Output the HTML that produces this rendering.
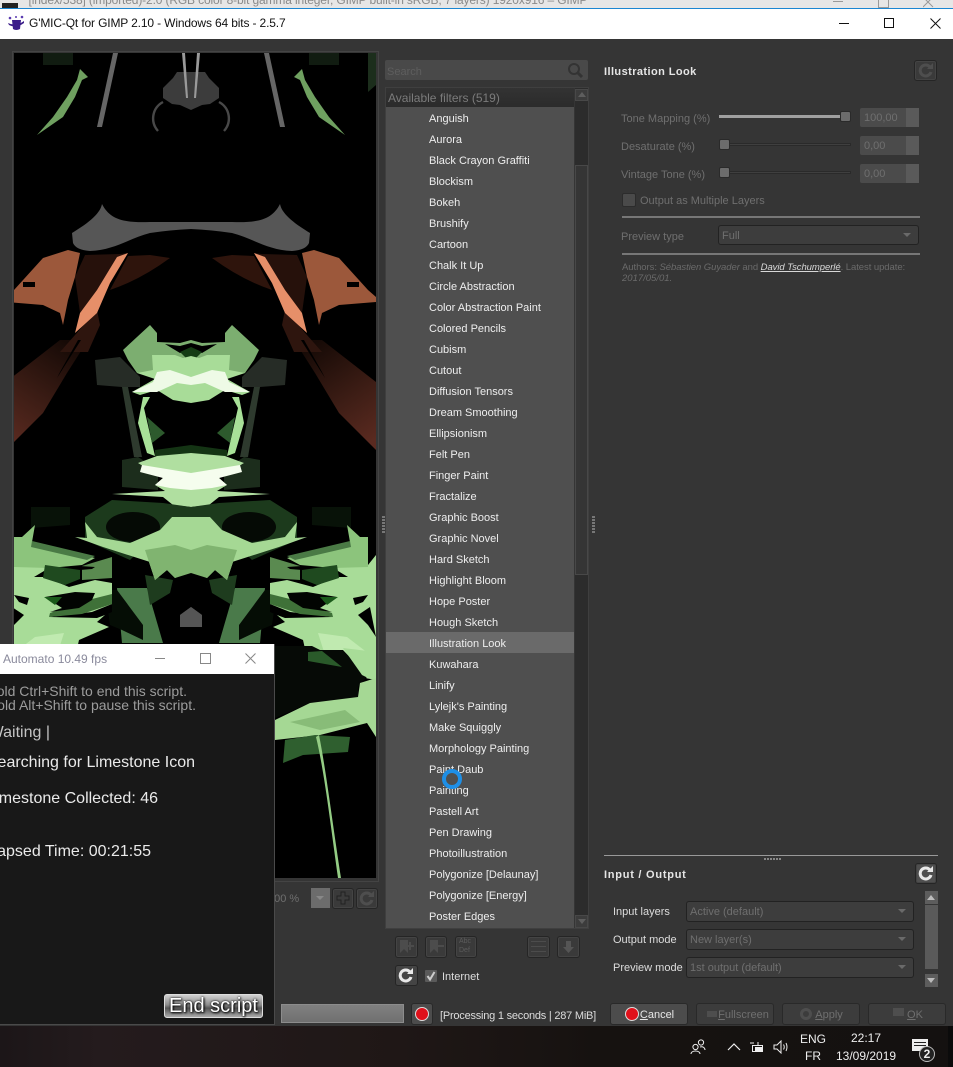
<!DOCTYPE html>
<html><head><meta charset="utf-8"><style>
html,body{margin:0;padding:0;background:#353535}
body{width:953px;height:1067px;position:relative;overflow:hidden;font-family:"Liberation Sans",sans-serif;font-size:11px;color:#ddd}
.a{position:absolute}
.t{position:absolute;white-space:nowrap;line-height:14px}
.btn{position:absolute;box-sizing:border-box;border:1px solid #252525;border-radius:3px;background:#3a3a3a;box-shadow:inset 0 0 0 1px #444}
.dim{color:#6f6f6f}
.combo{position:absolute;box-sizing:border-box;border:1px solid #222;border-radius:3px;background:#3d3d3d;color:#6f6f6f;line-height:20px;padding-left:3px;font-size:11px}
.combo:after{content:"";position:absolute;right:7px;top:7px;border:4px solid transparent;border-top:4px solid #6a6a6a;border-bottom:0}
.spin{position:absolute;left:860px;width:59px;height:19px;background:#4b4b4b;color:#6f6f6f;line-height:20px;padding-left:4px;box-sizing:border-box;border-radius:2px}
.spin:after{content:"";position:absolute;right:0;top:0;width:13px;height:19px;background:#5a5a5a}
.track{position:absolute;left:719px;width:132px;height:3px;background:#3f3f3f;border:1px solid #2a2a2a;box-sizing:border-box}
.hd{position:absolute;width:11px;height:11px;background:#6c6c6c;border:1px solid #2a2a2a;border-radius:2px;box-sizing:border-box}
#list{position:absolute;left:386px;top:107px;width:188px;height:821px;background:#4f4f4f;overflow:hidden}
#list div{height:21px;line-height:24px;padding-left:43px;color:#eee;white-space:nowrap}
#list .s{background:#6a6a6a}
.bb{position:absolute;top:1003px;height:22px;box-sizing:border-box;border:1px solid #292929;border-radius:3px;background:#3c3c3c;line-height:23px;color:#6f6f6f;text-align:center}
.w{position:absolute;white-space:nowrap;line-height:18px}
</style></head><body>

<!-- top strip -->
<div class="a" style="left:0;top:0;width:953px;height:8px;background:#e6e6e6;overflow:hidden">
<div class="t" style="left:24px;top:-7px;font-size:12px;color:#8a8a8a;letter-spacing:-.14px">*[index/538] (imported)-2.0 (RGB color 8-bit gamma integer, GIMP built-in sRGB, 7 layers) 1920x916 – GIMP</div>
<div class="a" style="left:2px;top:3px;width:16px;height:5px;background:#222"></div>
<div class="a" style="left:833px;top:1px;width:10px;height:1px;background:#999"></div>
<div class="a" style="left:878px;top:-3px;width:9px;height:9px;border:1px solid #999"></div>
<svg class="a" style="left:923px;top:0" width="12" height="8"><path d="M0 -3L10 7M10 -3L0 7" stroke="#999" fill="none"/></svg>
</div>
<div class="a" style="left:0;top:8px;width:953px;height:1px;background:#1b86d2"></div>
<!-- title -->
<div class="a" style="left:0;top:9px;width:953px;height:30px;background:#fff"></div>
<svg class="a" style="left:7px;top:15px" width="18" height="17" viewBox="0 0 18 17"><path d="M5 5L14 5L13 14Q9 16 6 14Z" fill="#3b1d8a"/><path d="M1 8Q9 12 17 6L17 8Q9 14 2 10Z" fill="#3b1d8a"/><circle cx="3" cy="3" r="1.3" fill="#5a3bb0"/><circle cx="15" cy="2" r="1.3" fill="#5a3bb0"/><circle cx="9" cy="2" r="1" fill="#5a3bb0"/></svg>
<div class="t" style="left:29px;top:16px;font-size:12px;color:#111;letter-spacing:-.145px">G'MIC-Qt for GIMP 2.10 - Windows 64 bits - 2.5.7</div>
<div class="a" style="left:839px;top:23px;width:10px;height:1px;background:#111"></div>
<div class="a" style="left:884px;top:18px;width:8px;height:8px;border:1px solid #111"></div>
<svg class="a" style="left:930px;top:18px" width="11" height="11"><path d="M0.5 0.5L10.5 10.5M10.5 0.5L0.5 10.5" stroke="#111" fill="none"/></svg>

<!-- preview -->
<div class="a" style="left:12px;top:51px;width:365px;height:829px;border:1px solid #444;box-sizing:content-box"></div>
<svg class="a" style="left:14px;top:53px" width="362" height="825" viewBox="14 53 362 825">
<rect x="14" y="53" width="362" height="825" fill="#000"/>
<defs>
<linearGradient id="br" x1="0.7" y1="0" x2="0.2" y2="1"><stop offset="0" stop-color="#160a06"/><stop offset=".6" stop-color="#3f1e16"/><stop offset="1" stop-color="#5a2a20"/></linearGradient>
</defs>
<g id="h">
<rect x="43" y="53" width="30" height="12" fill="#111c11"/>
<path d="M6 53H14V92L6 85Z" fill="#1c2e1c"/>
<path d="M37 135L53 117L67 97L77 80L80 69L88 77L82 80L75 97L63 117Z" fill="#6fa060"/>
<path d="M113 53L118 53L102 127L97 127Z" fill="#666"/>
<path d="M177 72L173 78L163 88L163 98L172 104L180 105L191 110V72Z" fill="#3c3c3c"/>
<path d="M163 102C152 108 150 122 158 131" stroke="#484848" stroke-width="2.4" fill="none"/>
<path d="M182 53L185 53L188 98L186 98Z" fill="#9a9a9a"/>
<path d="M102 204C100 215 85 225 72 233L73 243Q76 250 90 251C115 250 130 238 150 233Q170 230 191 229V222Q170 222 150 222C125 223 110 220 102 204Z" fill="#565656"/>
<!-- brown -->
<path d="M6 382L60 340L88 340L67 373L43 413L6 450Z" fill="url(#br)"/>
<path d="M75 277L85 255L120 254L128 253L110 283L97 290L80 313Z" fill="#26110b"/>
<path d="M97 310L75 335L60 352L88 352L100 325Z" fill="#2e150e"/>
<path d="M110 290Q140 280 170 258L150 255L128 256L118 275Z" fill="#2e140c"/>
<path d="M6 297L14 290L43 258L68 250L80 253L75 277L68 300L63 325L60 313L43 305L6 302Z" fill="#9c583b"/>
<path d="M23 282L35 282L35 287L23 287Z" fill="#000"/>
<path d="M128 253L117 257L97 290L80 313L75 333L97 313L110 283Z" fill="#e68f69"/>
<path d="M57 378L60 372L78 340L81 340Z" fill="#000"/>
<!-- centre -->
<path d="M95 360L120 357L140 377L140 387L122 387L97 385Z" fill="#262c26"/>
<path d="M122 387L128 387L142 457L134 457Z" fill="#2e3a2e"/>
<path d="M122 460L138 457L158 470L158 490L122 487Z" fill="#1c2d1c"/>
<path d="M123 350L150 325L157 333L157 342L180 343L191 340L191 375L137 373L128 360Z" fill="#7cae70"/>
<path d="M165 344L180 346L191 343L191 350L180 353Z" fill="#000"/>
<path d="M180 352L191 347L191 363Z" fill="#143c14"/>
<path d="M152 355L175 355L183 358L191 356L191 403L173 400L157 390L140 395L132 392L155 379L137 373L153 370Z" fill="#a8dc98"/>
<path d="M157 372L170 370L191 377L191 385L177 383L157 392L132 392L153 382Z" fill="#eefae6"/>
<path d="M143 397L138 423L147 453L155 456L144 408L150 397Z" fill="#a8e098"/>
<path d="M147 417L165 433L152 443Z" fill="#2d5a2d"/>
<path d="M155 450L191 445L191 456L155 456Z" fill="#143414"/>
<path d="M138 463L157 456L191 453L191 507L173 505L163 497L112 494L165 491L155 485L163 478Z" fill="#b0dfa0"/>
<path d="M142 465L191 473L191 490L170 488L155 485L163 478L140 472Z" fill="#f5fdee"/>
<path d="M85 517L112 500L163 503L191 507L191 530L172 517L160 530L130 560L85 540Z" fill="#1c3a1c"/>
<ellipse cx="133" cy="527" rx="27" ry="15" fill="#050a05"/>
<path d="M31 507L70 507L70 525L31 528Z" fill="#081208"/>
<path d="M117 588L147 588L163 643L122 643Z" fill="#4a7a4a"/>
<path d="M145 575L173 580L170 593L150 605Z" fill="#1e3c1e"/>
<path d="M105 590L117 590L143 625L143 640L122 630L110 625Z" fill="#050d05"/>
<path d="M191 607L202 615L202 627L180 627L180 615Z" fill="#555"/>
<path d="M85 522L97 537L130 543L160 530L172 517L191 517L191 570L175 578L167 570L155 580L145 550L150 562L103 547L75 537L87 538Z" fill="#a5d894"/>
<path d="M145 550L175 545L191 550L191 573L175 578L167 570L155 580Z" fill="#80b470"/>
</g>
<use href="#h" transform="matrix(-1 0 0 1 382 0)"/>
<!-- hand, right coordinates, mirrored to the left -->
<g id="hand">
<path d="M270 583L287 580L313 587L337 577L348 577L333 568L368 565L376 555L390 555V664L308 662L303 640L273 627L285 622L277 615L270 606Z" fill="#a8dc98"/>
<path d="M270 557L300 566L300 580L270 578Z" fill="#5a8a50"/>
<path d="M287 558L350 542L347 525L360 537L368 537L368 567L333 568L300 565Z" fill="#8cc47c"/>
<path d="M287 556L350 541L351 547L295 560Z" fill="#4a7a45"/>
<path d="M270 604L290 612L333 617L285 618L277 615L270 612Z" fill="#000"/>
<path d="M270 594L290 599L332 613L333 617L300 614L270 604Z" fill="#3f7138"/>
<path d="M287 593L307 592L337 597L320 608L332 612L303 608L290 600Z" fill="#020402"/>
<path d="M320 597L338 597L327 605Z" fill="#1a5a1a"/>
<path d="M353 598L368 595L363 602L355 605Z" fill="#000"/>
<path d="M358 615L370 607L376 637L368 625Z" fill="#000"/>
<path d="M302 570L337 565L339 578L317 585L302 579Z" fill="#1f4a1f"/>
<path d="M287 567L302 566L302 570L290 569Z" fill="#000"/>
<path d="M318 633L347 637L390 670L390 690L350 670L325 655Z" fill="#c0eab0"/>
</g>
<use href="#hand" transform="matrix(-1 0 0 1 382 0)"/>
<!-- lower right -->
<path d="M275 646H312L320 650L343 650L362 670L367 677L358 687L358 697L310 703L275 718Z" fill="#060a06"/>
<path d="M343 648L376 652L376 682L362 675Z" fill="#a8dc98"/>
<path d="M308 652L322 651L342 667L308 661Z" fill="#2a5a2a"/>
<path d="M365 678L376 680L376 693L365 693Z" fill="#000"/>
<path d="M275 720L310 703L358 697L360 683L376 678L376 737L367 723L320 735L275 740Z" fill="#a5d894"/>
<path d="M290 722L345 710L360 722L320 730Z" fill="#88bc78"/>
<path d="M285 740L315 735L350 737L348 752L303 755L283 763Z" fill="#2f5f2f"/>
<path d="M319 735C326 770 332 820 341 878L338 878C330 820 324 770 316 737Z" fill="#94cc84"/>
</svg>

<!-- zoom controls -->
<div class="t dim" style="left:268px;top:892px">100 %</div>
<div class="a" style="left:311px;top:888px;width:19px;height:20px;background:#6c6c6c"></div>
<div class="a" style="left:316px;top:896px;border:4px solid transparent;border-top:4px solid #888;border-bottom:0"></div>
<div class="btn" style="left:332px;top:888px;width:22px;height:21px"></div>
<svg class="a" style="left:335px;top:891px" width="16" height="15"><path d="M6 1H10V5H14V9H10V13H6V9H2V5H6Z" fill="#3c3c3c" stroke="#222"/></svg>
<div class="btn" style="left:356px;top:888px;width:22px;height:21px"></div>
<svg class="a" style="left:359px;top:891px" width="16" height="15"><path d="M12 4A5.5 5.5 0 1 0 13 9" stroke="#4e4e4e" stroke-width="3" fill="none"/><path d="M9 6H15V0Z" fill="#4e4e4e"/></svg>

<!-- search -->
<div class="a" style="left:385px;top:60px;width:203px;height:20px;background:#494949;border-radius:2px"></div>
<div class="t" style="left:387px;top:65px;color:#5e5e5e">Search</div>
<svg class="a" style="left:566px;top:61px" width="18" height="18"><circle cx="8" cy="8" r="5" stroke="#333" stroke-width="2" fill="none"/><path d="M11.5 11.5L16 16" stroke="#333" stroke-width="3"/></svg>

<!-- list -->
<div class="a" style="left:385px;top:87px;width:204px;height:842px;border:1px solid #3f3f3f;box-sizing:border-box"></div>
<div class="a" style="left:386px;top:88px;width:188px;height:19px;background:linear-gradient(#333,#2b2b2b)"></div>
<div class="t" style="left:388px;top:91px;font-size:12px;color:#7b7b7b">Available filters (519)</div>
<div id="list">
<div>Anguish</div><div>Aurora</div><div>Black Crayon Graffiti</div><div>Blockism</div><div>Bokeh</div><div>Brushify</div><div>Cartoon</div><div>Chalk It Up</div><div>Circle Abstraction</div><div>Color Abstraction Paint</div><div>Colored Pencils</div><div>Cubism</div><div>Cutout</div><div>Diffusion Tensors</div><div>Dream Smoothing</div><div>Ellipsionism</div><div>Felt Pen</div><div>Finger Paint</div><div>Fractalize</div><div>Graphic Boost</div><div>Graphic Novel</div><div>Hard Sketch</div><div>Highlight Bloom</div><div>Hope Poster</div><div>Hough Sketch</div><div class="s">Illustration Look</div><div>Kuwahara</div><div>Linify</div><div>Lylejk's Painting</div><div>Make Squiggly</div><div>Morphology Painting</div><div>Paint Daub</div><div>Painting</div><div>Pastell Art</div><div>Pen Drawing</div><div>Photoillustration</div><div>Polygonize [Delaunay]</div><div>Polygonize [Energy]</div><div>Poster Edges</div>
</div>
<!-- list scrollbar -->
<div class="a" style="left:575px;top:88px;width:13px;height:840px;background:#2c2c2c"></div>
<div class="a" style="left:575px;top:89px;width:13px;height:12px;box-sizing:border-box;border:1px solid #484848;background:#3c3c3c"></div>
<div class="a" style="left:578px;top:92px;border:4px solid transparent;border-bottom:5px solid #5e5e5e;border-top:0"></div>
<div class="a" style="left:575px;top:165px;width:13px;height:410px;box-sizing:border-box;border:1px solid #484848;background:#353535"></div>
<div class="a" style="left:575px;top:915px;width:13px;height:13px;box-sizing:border-box;border:1px solid #484848;background:#3c3c3c"></div>
<div class="a" style="left:578px;top:919px;border:4px solid transparent;border-top:5px solid #5e5e5e;border-bottom:0"></div>

<!-- splitter dots -->
<div class="a" style="left:592px;top:516px;width:3px;height:17px;background:repeating-linear-gradient(#777 0 2px,transparent 2px 3px)"></div>
<div class="a" style="left:382px;top:516px;width:3px;height:17px;background:repeating-linear-gradient(#777 0 2px,transparent 2px 3px)"></div>

<!-- spinner -->
<svg class="a" style="left:440px;top:767px" width="24" height="24"><circle cx="12" cy="12" r="8" stroke="#1e8fe6" stroke-width="4" fill="none"/></svg>

<!-- right panel -->
<div class="t" style="left:604px;top:65px;font-weight:bold;color:#e6e6e6;letter-spacing:.42px">Illustration Look</div>
<div class="btn" style="left:914px;top:60px;width:23px;height:21px"></div>
<svg class="a" style="left:918px;top:63px" width="16" height="15"><path d="M12 4A5.5 5.5 0 1 0 13 9" stroke="#4e4e4e" stroke-width="3" fill="none"/><path d="M9 6H15V0Z" fill="#4e4e4e"/></svg>

<div class="t dim" style="left:621px;top:112px">Tone Mapping (%)</div>
<div class="a" style="left:719px;top:115px;width:121px;height:3px;background:#a0a0a0"></div>
<div class="hd" style="left:840px;top:111px"></div>
<div class="spin" style="top:108px">100,00</div>

<div class="t dim" style="left:621px;top:140px">Desaturate (%)</div>
<div class="track" style="top:143px"></div>
<div class="hd" style="left:719px;top:139px"></div>
<div class="spin" style="top:136px">0,00</div>

<div class="t dim" style="left:621px;top:168px">Vintage Tone (%)</div>
<div class="track" style="top:171px"></div>
<div class="hd" style="left:719px;top:167px"></div>
<div class="spin" style="top:164px">0,00</div>

<div class="a" style="left:622px;top:193px;width:12px;height:12px;background:#4a4a4a;border:1px solid #2c2c2c;border-radius:2px"></div>
<div class="t dim" style="left:640px;top:194px">Output as Multiple Layers</div>
<div class="a" style="left:622px;top:216px;width:298px;height:2px;background:#777"></div>
<div class="t dim" style="left:621px;top:230px">Preview type</div>
<div class="combo" style="left:718px;top:225px;width:201px;height:20px">Full</div>
<div class="a" style="left:622px;top:253px;width:298px;height:2px;background:#777"></div>
<div class="t" style="left:622px;top:261px;font-size:9.5px;color:#6a6a6a;letter-spacing:-.06px">Authors: <i>Sébastien Guyader</i> and <i style="color:#d8d8d8;text-decoration:underline">David Tschumperlé</i>. Latest update:</div>
<div class="t" style="left:622px;top:272px;font-size:9.5px;color:#6a6a6a"><i>2017/05/01.</i></div>

<!-- IO -->
<div class="a" style="left:604px;top:855px;width:334px;height:1px;background:#999"></div>
<div class="a" style="left:764px;top:858px;width:17px;height:2px;background:repeating-linear-gradient(90deg,#888 0 2px,transparent 2px 3px)"></div>
<div class="t" style="left:604px;top:868px;font-weight:bold;color:#e6e6e6;letter-spacing:.75px">Input / Output</div>
<div class="btn" style="left:915px;top:863px;width:22px;height:21px;background:#4f4f4f"></div>
<svg class="a" style="left:918px;top:866px" width="16" height="15"><path d="M12 4A5.5 5.5 0 1 0 13 9" stroke="#e8e8e8" stroke-width="3" fill="none"/><path d="M9 6H15V0Z" fill="#e8e8e8"/></svg>
<div class="t" style="left:613px;top:905px;color:#ddd">Input layers</div>
<div class="combo" style="left:686px;top:901px;width:228px;height:21px">Active (default)</div>
<div class="t" style="left:613px;top:933px;color:#ddd">Output mode</div>
<div class="combo" style="left:686px;top:929px;width:228px;height:21px">New layer(s)</div>
<div class="t" style="left:613px;top:961px;color:#ddd">Preview mode</div>
<div class="combo" style="left:686px;top:957px;width:228px;height:21px">1st output (default)</div>
<div class="a" style="left:925px;top:891px;width:13px;height:13px;background:#5d5d5d"></div>
<div class="a" style="left:927px;top:895px;border:4.5px solid transparent;border-bottom:5px solid #bbb;border-top:0"></div>
<div class="a" style="left:925px;top:905px;width:13px;height:64px;background:#5a5a5a"></div>
<div class="a" style="left:925px;top:974px;width:13px;height:13px;background:#5d5d5d"></div>
<div class="a" style="left:927px;top:978px;border:4.5px solid transparent;border-top:5px solid #bbb;border-bottom:0"></div>

<!-- fave buttons -->
<div class="btn" style="left:395px;top:936px;width:23px;height:22px"></div>
<svg class="a" style="left:398px;top:939px" width="17" height="16"><path d="M2 1H10V14L6 10L2 14Z" fill="#4c4c4c"/><path d="M8 7H16M12 3V11" stroke="#4c4c4c" stroke-width="2"/></svg>
<div class="btn" style="left:425px;top:936px;width:22px;height:22px"></div>
<svg class="a" style="left:428px;top:939px" width="17" height="16"><path d="M2 1H10V14L6 10L2 14Z" fill="#4c4c4c"/><path d="M9 7H16" stroke="#4c4c4c" stroke-width="2"/></svg>
<div class="btn" style="left:455px;top:936px;width:22px;height:22px"></div>
<div class="t" style="left:459px;top:937px;font-size:7px;line-height:10px;color:#5c5c5c">Abc</div>
<div class="t" style="left:459px;top:946px;font-size:7px;line-height:10px;color:#5c5c5c">Def</div>
<div class="btn" style="left:527px;top:936px;width:23px;height:22px"></div>
<div class="a" style="left:531px;top:941px;width:15px;height:12px;background:repeating-linear-gradient(#4c4c4c 0 1px,transparent 1px 5px)"></div>
<div class="btn" style="left:557px;top:936px;width:23px;height:22px"></div>
<svg class="a" style="left:560px;top:939px" width="17" height="16"><path d="M6 2H11V8H14L8.5 14L3 8H6Z" fill="#555"/></svg>
<div class="btn" style="left:395px;top:965px;width:23px;height:21px;background:#444"></div>
<svg class="a" style="left:398px;top:968px" width="16" height="15"><path d="M12 4A5.5 5.5 0 1 0 13 9" stroke="#e8e8e8" stroke-width="3" fill="none"/><path d="M9 6H15V0Z" fill="#e8e8e8"/></svg>
<div class="a" style="left:425px;top:970px;width:12px;height:12px;background:#5a5a5a;border-radius:1px"></div>
<svg class="a" style="left:425px;top:970px" width="12" height="12"><path d="M2.5 6L5 9.5L9.5 2" stroke="#ccc" stroke-width="2" fill="none"/></svg>
<div class="t" style="left:442px;top:970px;color:#ddd">Internet</div>

<!-- bottom bar -->
<div class="a" style="left:281px;top:1004px;width:123px;height:19px;background:linear-gradient(#808080,#707070);border:1px solid #8c8c8c;box-sizing:border-box"></div>
<div class="bb" style="left:411px;width:22px;background:#4c4c4c"></div>
<div class="a" style="left:416px;top:1008px;width:12px;height:12px;border-radius:50%;background:#e0101a;box-shadow:0 0 0 1px #ddd"></div>
<div class="t" style="left:440px;top:1009px;color:#ddd;letter-spacing:-.22px">[Processing 1 seconds | 287 MiB]</div>
<div class="bb" style="left:610px;width:78px;background:#4c4c4c;color:#e6e6e6;padding-left:16px"><u>C</u>ancel</div>
<div class="a" style="left:626px;top:1008px;width:12px;height:12px;border-radius:50%;background:#e0101a;box-shadow:0 0 0 1px #ddd"></div>
<div class="bb" style="left:696px;width:78px;padding-left:17px"><u>F</u>ullscreen</div>
<div class="a" style="left:707px;top:1011px;width:10px;height:6px;background:#4e4e4e"></div>
<div class="bb" style="left:782px;width:78px;padding-left:16px"><u>A</u>pply</div>
<svg class="a" style="left:798px;top:1006px" width="16" height="16"><circle cx="8" cy="8" r="4.5" fill="none" stroke="#4e4e4e" stroke-width="3"/></svg>
<div class="bb" style="left:868px;width:78px;padding-left:16px"><u>O</u>K</div>
<div class="a" style="left:893px;top:1008px;width:11px;height:8px;background:#4e4e4e"></div>

<!-- taskbar -->
<div class="a" style="left:0;top:1026px;width:953px;height:41px;background:linear-gradient(90deg,#1c1618 0,#241b1d 100px,#1f1716 400px,#161210 600px,#141110 100%)"></div>
<div class="a" style="left:948px;top:1026px;width:5px;height:41px;background:#0b0b0b"></div>
<svg class="a" style="left:690px;top:1038px" width="16" height="17"><circle cx="5.5" cy="9" r="2.6" fill="none" stroke="#eee"/><path d="M1 16C1 12 10 12 10 16" stroke="#eee" fill="none"/><circle cx="11" cy="4.5" r="2.6" fill="none" stroke="#eee"/><path d="M10 9C13 8 15 10 15 12" stroke="#eee" fill="none"/></svg>
<svg class="a" style="left:727px;top:1042px" width="14" height="9"><path d="M1 8L7 2L13 8" stroke="#eee" stroke-width="1.2" fill="none"/></svg>
<svg class="a" style="left:750px;top:1041px" width="15" height="13"><rect x="2.5" y="4.5" width="10" height="6" fill="none" stroke="#eee"/><rect x="5" y="6" width="7" height="4" fill="#eee"/><path d="M0 2H4M8 1V4" stroke="#eee"/></svg>
<svg class="a" style="left:773px;top:1040px" width="17" height="14"><path d="M1 5H4L8 1V13L4 9H1Z" fill="none" stroke="#eee"/><path d="M10.5 4.5Q12 7 10.5 9.5M13 3Q15 7 13 11" fill="none" stroke="#eee"/></svg>
<div class="t" style="left:800px;top:1032px;font-size:12px;color:#eee">ENG</div>
<div class="t" style="left:805px;top:1049px;font-size:12px;color:#eee">FR</div>
<div class="t" style="left:851px;top:1031px;font-size:12px;color:#eee">22:17</div>
<div class="t" style="left:836px;top:1049px;font-size:12px;color:#eee">13/09/2019</div>
<div class="a" style="left:912px;top:1039px;width:16px;height:12px;background:#eee"></div>
<div class="a" style="left:914px;top:1042px;width:12px;height:1px;background:#222"></div>
<div class="a" style="left:914px;top:1045px;width:12px;height:1px;background:#222"></div>
<div class="a" style="left:919px;top:1046px;width:16px;height:16px;border-radius:50%;background:#222;border:1px solid #bbb;box-sizing:border-box;text-align:center;font-size:12px;font-weight:bold;line-height:14px;color:#eee">2</div>

<!-- Automato window -->
<div class="a" style="left:0;top:644px;width:275px;height:381px;background:#181818;overflow:hidden;border-right:1px solid #4a4a4a;border-bottom:1px solid #4a4a4a;box-sizing:border-box">
<div class="a" style="left:0;top:0;width:275px;height:30px;background:#fff"></div>
<div class="t" style="left:3px;top:8px;font-size:12px;color:#8a8a9c">Automato 10.49 fps</div>
<div class="a" style="left:155px;top:14px;width:10px;height:1px;background:#888"></div>
<div class="a" style="left:200px;top:9px;width:9px;height:9px;border:1px solid #888"></div>
<svg class="a" style="left:245px;top:9px" width="11" height="11"><path d="M0.5 0.5L10.5 10.5M10.5 0.5L0.5 10.5" stroke="#888" fill="none"/></svg>
<div class="w" style="top:38px;font-size:14px;color:#9c9c9c;right:calc(274px - 187px)">Hold Ctrl+Shift to end this script.</div>
<div class="w" style="top:52px;font-size:14px;color:#9c9c9c;right:calc(274px - 196px)">Hold Alt+Shift to pause this script.</div>
<div class="w" style="top:80px;font-size:16px;color:#c4c4c4;right:calc(274px - 50px)">Waiting |</div>
<div class="w" style="top:110px;font-size:16px;color:#eaeaea;right:calc(274px - 195px)">Searching for Limestone Icon</div>
<div class="w" style="top:146px;font-size:16px;color:#eaeaea;right:calc(274px - 158px)">Limestone Collected: 46</div>
<div class="w" style="top:199px;font-size:16px;color:#eaeaea;right:calc(274px - 151px)">Elapsed Time: 00:21:55</div>
<div class="a" style="left:164px;top:350px;width:99px;height:24px;border-radius:3px;background:linear-gradient(#d0d0d0,#8c8c8c 45%,#555 60%,#aaa);box-sizing:border-box;border:1px solid #ddd;text-align:center;font-size:20px;line-height:22px;color:#fff;text-shadow:1px 1px 2px #000,0 0 2px #000;white-space:nowrap">End script</div>
</div>
</body></html>
